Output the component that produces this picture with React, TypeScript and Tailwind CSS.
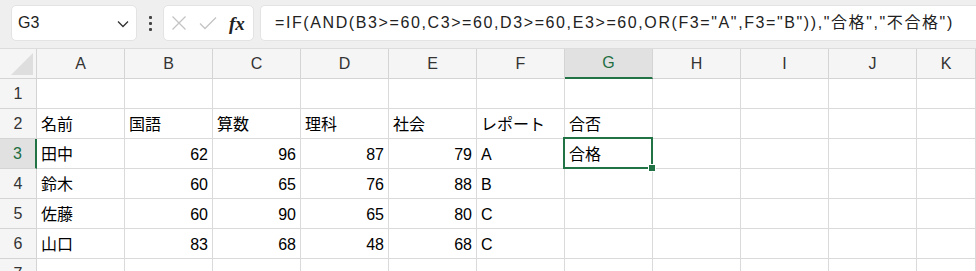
import React from 'react';

const cols = ['A', 'B', 'C', 'D', 'E', 'F', 'G', 'H', 'I', 'J', 'K'];

type Cell = { v: string; num?: boolean };

const rows: Cell[][] = [
  [],
  [{ v: '名前' }, { v: '国語' }, { v: '算数' }, { v: '理科' }, { v: '社会' }, { v: 'レポート' }, { v: '合否' }],
  [{ v: '田中' }, { v: '62', num: true }, { v: '96', num: true }, { v: '87', num: true }, { v: '79', num: true }, { v: 'A' }, { v: '合格' }],
  [{ v: '鈴木' }, { v: '60', num: true }, { v: '65', num: true }, { v: '76', num: true }, { v: '88', num: true }, { v: 'B' }],
  [{ v: '佐藤' }, { v: '60', num: true }, { v: '90', num: true }, { v: '65', num: true }, { v: '80', num: true }, { v: 'C' }],
  [{ v: '山口' }, { v: '83', num: true }, { v: '68', num: true }, { v: '48', num: true }, { v: '68', num: true }, { v: 'C' }],
  [],
];

const font = { fontFamily: '"Liberation Sans", "Noto Sans CJK JP", sans-serif' };

export default function App() {
  return (
    <div className="w-[976px] h-[271px] overflow-hidden bg-white text-[#000]" style={font}>
      {/* Formula bar */}
      <div className="h-[49px] flex items-start pt-[5px] bg-[#efefef] border-b border-[#dcdcdc]">
        <div className="ml-[11px] w-[126px] h-[36px] bg-white rounded-[5px] border border-[#e3e3e3] flex items-center justify-between pl-[6px] pr-[7px]">
          <span className="text-[16px] text-[#222]">G3</span>
          <svg width="12" height="8" viewBox="0 0 12 8" className="mt-[1px]">
            <path d="M1 1.5 L6 6.5 L11 1.5" fill="none" stroke="#333" strokeWidth="1.3" />
          </svg>
        </div>
        <div className="w-[26px] h-[36px] flex flex-col items-center justify-center gap-[3px]">
          <span className="w-[3px] h-[3px] bg-[#444] rounded-[1px]" />
          <span className="w-[3px] h-[3px] bg-[#444] rounded-[1px]" />
          <span className="w-[3px] h-[3px] bg-[#444] rounded-[1px]" />
        </div>
        <div className="w-[91px] h-[36px] bg-white rounded-[5px] border border-[#e3e3e3] flex items-center pl-[7px]">
          <svg width="16" height="16" viewBox="0 0 16 16">
            <path d="M1.5 1.5 L14.5 14.5 M14.5 1.5 L1.5 14.5" stroke="#c4c4c4" strokeWidth="1.3" fill="none" />
          </svg>
          <svg width="18" height="14" viewBox="0 0 18 14" className="ml-[12px]">
            <path d="M1 7.5 L6 12.5 L17 1.5" stroke="#c4c4c4" strokeWidth="1.3" fill="none" />
          </svg>
          <span
            className="ml-[12px] text-[19px] italic font-bold text-[#222] leading-none"
            style={{ fontFamily: '"Liberation Serif", "DejaVu Serif", serif' }}
          >
            fx
          </span>
        </div>
        <div className="ml-[6px] flex-1 h-[36px] bg-white rounded-l-[5px] border border-r-0 border-[#e3e3e3] flex items-center pl-[14px] text-[16px] tracking-[1.6px] text-[#222] whitespace-nowrap">
          =IF(AND(B3&gt;=60,C3&gt;=60,D3&gt;=60,E3&gt;=60,OR(F3="A",F3="B")),"合格","不合格")
        </div>
      </div>

      {/* Grid */}
      <div className="grid grid-cols-[37px_repeat(10,88px)_1fr]">
        {/* Column headers */}
        <div className="h-[30px] bg-[#f5f5f5] border-r border-b border-[#d4d4d4] relative">
          <svg width="22" height="22" viewBox="0 0 22 22" className="absolute right-[3px] bottom-[3px]">
            <path d="M22 0 L22 22 L0 22 Z" fill="#dedede" />
          </svg>
        </div>
        {cols.map((c) => {
          const sel = c === 'G';
          return (
            <div
              key={c}
              className={`h-[30px] flex items-center justify-center text-[16px] border-r ${
                sel
                  ? 'bg-[#e1e1e1] text-[#1e6e42] border-b-2 border-b-[#217346] border-r-[#d4d4d4]'
                  : 'bg-[#f5f5f5] text-[#333] border-b border-[#d4d4d4]'
              }`}
            >
              {c}
            </div>
          );
        })}

        {rows.map((r, ri) => {
          const rowNum = ri + 1;
          const selRow = rowNum === 3;
          return (
            <React.Fragment key={rowNum}>
              <div
                className={`h-[30px] flex items-center justify-center text-[16px] border-b border-[#d4d4d4] ${
                  selRow
                    ? 'bg-[#e1e1e1] text-[#1e6e42] border-r-2 border-r-[#217346]'
                    : 'bg-[#f5f5f5] text-[#333] border-r border-r-[#d4d4d4]'
                }`}
              >
                {rowNum}
              </div>
              {cols.map((c, ci) => {
                const cell = r[ci];
                const sel = selRow && c === 'G';
                return (
                  <div
                    key={c}
                    className={`h-[30px] relative flex items-center text-[16px] border-r border-b border-[#dadada] ${
                      cell?.num ? 'justify-end pr-[4px]' : 'pl-[4px]'
                    }`}
                  >
                    <span className="pt-[2px]">{cell?.v}</span>
                    {sel && (
                      <>
                        <div className="absolute -left-[2px] -top-[2px] -right-[1px] -bottom-[1px] border-2 border-[#217346] pointer-events-none" />
                        <div className="absolute -right-[4px] -bottom-[4px] w-[8px] h-[8px] bg-[#217346] border border-white z-10" />
                      </>
                    )}
                  </div>
                );
              })}
            </React.Fragment>
          );
        })}
      </div>
    </div>
  );
}
